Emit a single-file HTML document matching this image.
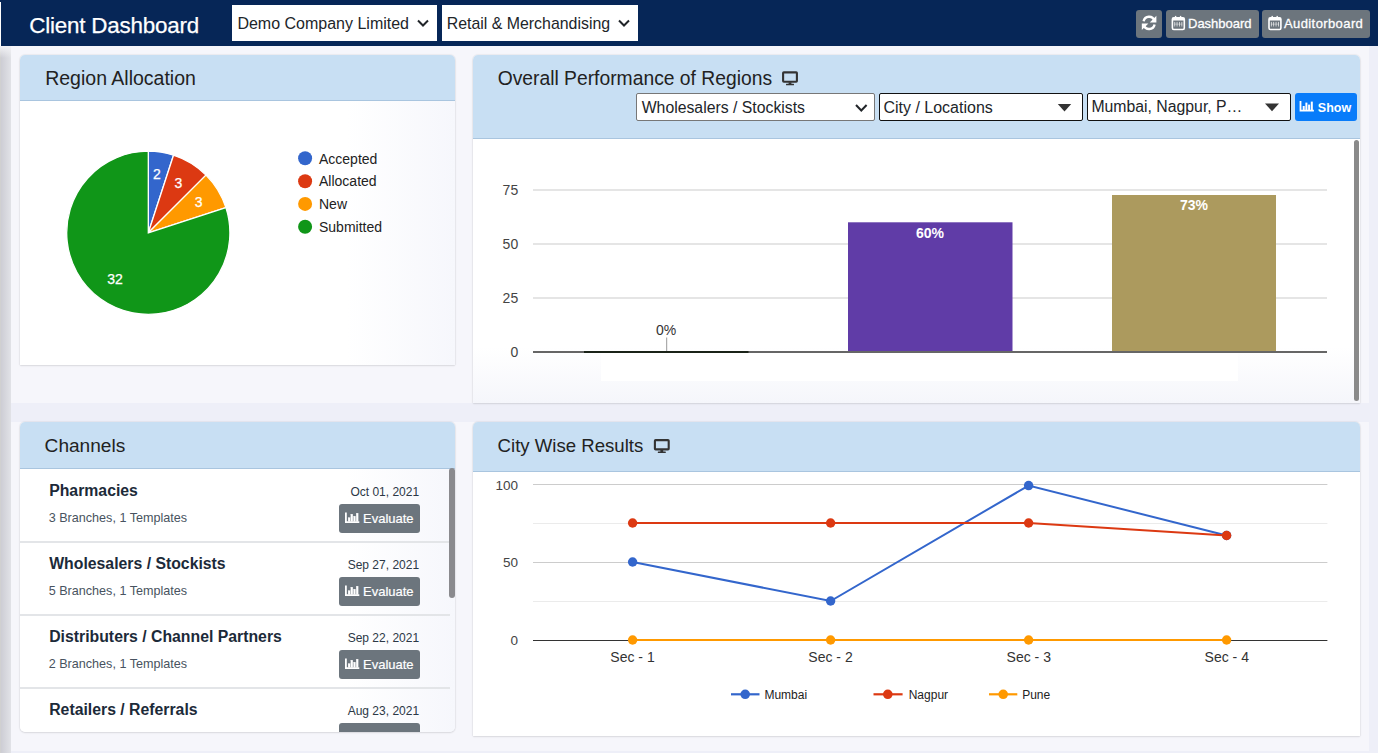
<!DOCTYPE html>
<html><head><meta charset="utf-8">
<style>
*{box-sizing:border-box;margin:0;padding:0}
html,body{width:1378px;height:753px;overflow:hidden}
body{background:#eeeff8;font-family:"Liberation Sans",sans-serif;position:relative;color:#212529}
.abs{position:absolute}
#lstrip{left:0;top:46px;width:11px;height:707px;background:linear-gradient(90deg,#d0d0d0 0,#d0d0d0 1px,#cdcdd4 1px,#e1e2e7 11px)}
#hdr{left:1px;top:0;width:1377px;height:46px;background:#062657}
.row{left:11px;width:1358px;background:#f6f6fb}
.sel{background:#fff;height:36px;top:5px}
.btn{background:#6c757d;border-radius:3px;height:28px;top:10px}
.card{background:linear-gradient(90deg,#fff 75%,#f6f7fc);border-radius:5px 5px 0 0;box-shadow:0 0 1.5px rgba(0,0,0,.22),0 1px 2px rgba(0,0,0,.08);overflow:hidden}
.ch{background:#c8dff3;border-bottom:1px solid #a9c5df;position:absolute;left:0;top:0;width:100%}
.hs{background:#fff;height:28px;top:38px;border:1px solid #777;border-radius:2px}
svg{position:absolute;left:0;top:0}
svg text{font-family:"Liberation Sans",sans-serif}
</style></head><body>
<div class="abs" id="hdr"></div>
<div class="abs" id="lstrip"></div>
<div class="abs" style="left:0;top:46px;width:20px;height:12px;background:linear-gradient(180deg,#f2f2f5,rgba(242,242,245,0))"></div>
<div class="abs row" style="top:46px;height:357px"></div>
<div class="abs row" style="top:422px;height:329px"></div>
<div class="abs" style="left:0;top:0;width:1px;height:2px;background:#062657"></div><div class="abs" style="left:0;top:2px;width:1px;height:44px;background:#fff"></div>

<div class="abs sel" style="left:231.7px;width:205.5px"></div>
<div class="abs sel" style="left:441.7px;width:196.7px"></div>
<div class="abs btn" style="left:1136px;width:26px"></div>
<div class="abs btn" style="left:1166px;width:93px"></div>
<div class="abs btn" style="left:1262px;width:108px"></div>

<!-- Card 1 -->
<div class="abs card" style="left:20px;top:55px;width:435px;height:310px">
  <div class="ch" style="height:46px"></div>
</div>
<!-- Card 2 -->
<div class="abs card" style="left:473px;top:55px;width:887px;height:348px;background:linear-gradient(180deg,#fff 84%,#f5f6fb)">
  <div class="abs" style="left:128px;top:298px;width:637px;height:28px;background:#fff"></div>
  <div class="ch" style="height:84px">
    <div class="abs hs" style="left:163px;width:239px"></div>
    <div class="abs hs" style="left:406px;width:204px;border-color:#111"></div>
    <div class="abs hs" style="left:614px;width:204px;border-color:#111"></div>
    <div class="abs" style="left:822px;top:38px;width:62px;height:28px;background:#087cfa;border-radius:3px"></div>
  </div>
  <div class="abs" style="left:881px;top:85px;width:5px;height:261px;background:#8a8a8a;border-radius:3px"></div>
</div>
<!-- Card 3 -->
<div class="abs card" style="left:20px;top:422px;width:435px;height:310px;border-radius:5px">
  <div class="ch" style="height:47px"></div>
  <div class="abs" style="left:0;top:119px;width:430px;height:2px;background:#e3e5e8"></div>
  <div class="abs" style="left:0;top:192px;width:430px;height:2px;background:#e3e5e8"></div>
  <div class="abs" style="left:0;top:265px;width:430px;height:2px;background:#e3e5e8"></div>
  <div class="abs btn" style="left:319px;top:82px;width:81px;height:29px"></div>
  <div class="abs btn" style="left:319px;top:155px;width:81px;height:29px"></div>
  <div class="abs btn" style="left:319px;top:228px;width:81px;height:29px"></div>
  <div class="abs btn" style="left:319px;top:301px;width:81px;height:29px"></div>
  <div class="abs" style="left:429px;top:46px;width:6px;height:130px;background:#8a8a8e;border-radius:3px"></div>
</div>
<!-- Card 4 -->
<div class="abs card" style="left:473px;top:422px;width:887px;height:314px;background:#fff">
  <div class="ch" style="height:50px"></div>
</div>

<svg width="1378" height="753" viewBox="0 0 1378 753">
<defs>
  <g id="cal">
    <rect x="0.8" y="2.4" width="11.9" height="11.6" rx="1.4" fill="none" stroke="#fff" stroke-width="1.6"/>
    <rect x="0.8" y="2.4" width="11.9" height="2.6" fill="#fff"/>
    <rect x="3.3" y="0.4" width="1.4" height="2.6" fill="#fff"/>
    <rect x="8.3" y="0.4" width="1.4" height="2.6" fill="#fff"/>
    <g fill="#fff" opacity=".75">
      <rect x="2.7" y="6.4" width="0.9" height="4.6"/><rect x="5" y="6.4" width="0.9" height="4.6"/><rect x="7.4" y="6.4" width="0.9" height="4.6"/><rect x="9.8" y="6.4" width="0.9" height="4.6"/>
    </g>
    <g fill="#fff" opacity=".5"><rect x="2.7" y="8.2" width="8" height="0.8"/></g>
  </g>
  <g id="bars">
    <path d="M0.9 0 V9.7 H14.3" fill="none" stroke="#fff" stroke-width="1.8"/>
    <rect x="3.1" y="5" width="2" height="4" fill="#fff"/>
    <rect x="5.8" y="1.6" width="2" height="7.4" fill="#fff"/>
    <rect x="8.5" y="3.6" width="2" height="5.4" fill="#fff"/>
    <rect x="11.2" y="0.6" width="2" height="8.4" fill="#fff"/>
  </g>
  <g id="desk">
    <rect x="1.1" y="1.1" width="13.8" height="9.3" rx="0.7" fill="none" stroke="#333" stroke-width="2.1"/>
    <rect x="6.6" y="11" width="2.8" height="2" fill="#333"/>
    <rect x="4" y="12.4" width="8" height="1.6" rx=".5" fill="#333"/>
  </g>
</defs>

<!-- header text -->
<text x="29.3" y="32.8" font-size="22.4" letter-spacing="-0.2" fill="#fff" stroke="#fff" stroke-width="0.25">Client Dashboard</text>
<text x="237.4" y="28.9" font-size="16" fill="#212529">Demo Company Limited</text>
<path d="M418 20.5 L423 25.5 L428 20.5" fill="none" stroke="#212529" stroke-width="2"/>
<text x="446.7" y="28.9" font-size="15.9" fill="#212529">Retail &amp; Merchandising</text>
<path d="M619 20.5 L624 25.5 L629 20.5" fill="none" stroke="#212529" stroke-width="2"/>

<!-- refresh icon -->
<g fill="none" stroke="#fff" stroke-width="2.4">
  <path d="M1143.6 21.2 A5.6 5.6 0 0 1 1154.4 20.6"/>
  <path d="M1154.6 24.6 A5.6 5.6 0 0 1 1143.8 25.2"/>
</g>
<path d="M1156.4 15.8 V22.4 H1149.8 Z" fill="#fff"/>
<path d="M1141.8 30 V23.4 H1148.4 Z" fill="#fff"/>

<use href="#cal" x="1171.6" y="15.5"/>
<text x="1188" y="27.9" font-size="13" fill="#fff" stroke="#fff" stroke-width="0.3">Dashboard</text>
<use href="#cal" x="1268.2" y="15.5"/>
<text x="1284" y="27.8" font-size="13" letter-spacing="0.4" fill="#fff" stroke="#fff" stroke-width="0.3">Auditorboard</text>

<!-- card titles -->
<text x="45.2" y="84.7" font-size="19.5" fill="#222">Region Allocation</text>
<text x="497.7" y="84.5" font-size="19.3" fill="#222">Overall Performance of Regions</text>
<use href="#desk" x="782" y="71.3"/>
<text x="44.6" y="451.8" font-size="19.1" fill="#222">Channels</text>
<text x="497.6" y="451.8" font-size="18.6" fill="#222">City Wise Results</text>
<use href="#desk" x="653.8" y="439"/>

<!-- card2 selects text -->
<text x="641.7" y="112.5" font-size="15.8" fill="#212529">Wholesalers / Stockists</text>
<path d="M856 105 L861.3 110.5 L866.6 105" fill="none" stroke="#212529" stroke-width="2"/>
<text x="883.4" y="112.7" font-size="16" fill="#212529">City / Locations</text>
<path d="M1057.8 104 H1071.2 L1064.5 111.4 Z" fill="#333"/>
<text x="1091.4" y="112.4" font-size="15.8" fill="#212529">Mumbai, Nagpur, P&#8230;</text>
<path d="M1265 103.5 H1279 L1272 111.2 Z" fill="#333"/>
<use href="#bars" x="1299.6" y="101" transform="translate(0,0)"/>
<text x="1317.8" y="111.8" font-size="12.5" font-weight="bold" fill="#fff">Show</text>

<!-- PIE -->
<g stroke="#fff" stroke-width="1.3">
  <path d="M148.3 232.8 L148.3 151.2 A81.6 81.6 0 0 1 173.52 155.19 Z" fill="#3366cc"/>
  <path d="M148.3 232.8 L173.52 155.19 A81.6 81.6 0 0 1 206.0 175.1 Z" fill="#dc3912"/>
  <path d="M148.3 232.8 L206.0 175.1 A81.6 81.6 0 0 1 225.91 207.58 Z" fill="#ff9900"/>
  <path d="M148.3 232.8 L225.91 207.58 A81.6 81.6 0 1 1 148.3 151.2 Z" fill="#109618"/>
</g>
<g font-size="14" fill="#fff" text-anchor="middle" stroke="#fff" stroke-width="0.25">
  <text x="156.8" y="179.2">2</text>
  <text x="178.3" y="188">3</text>
  <text x="198.7" y="206.6">3</text>
  <text x="115" y="284.3">32</text>
</g>
<circle cx="305.1" cy="158.2" r="7" fill="#3366cc"/>
<circle cx="305.1" cy="181.2" r="7" fill="#dc3912"/>
<circle cx="305.1" cy="203.9" r="7" fill="#ff9900"/>
<circle cx="305.1" cy="226.7" r="7" fill="#109618"/>
<g font-size="14" fill="#222">
  <text x="319" y="163.9">Accepted</text>
  <text x="319" y="186.2">Allocated</text>
  <text x="319" y="208.6">New</text>
  <text x="319" y="232">Submitted</text>
</g>

<!-- BAR CHART -->
<g stroke="#dddddd" stroke-width="1.5">
  <line x1="533" y1="190" x2="1327" y2="190"/>
  <line x1="533" y1="244" x2="1327" y2="244"/>
  <line x1="533" y1="298" x2="1327" y2="298"/>
</g>
<rect x="848" y="222.3" width="164.5" height="129.7" fill="#603ca7"/>
<rect x="1112" y="195" width="164" height="157" fill="#ac9a5e"/>
<line x1="533" y1="352" x2="1327" y2="352" stroke="#666" stroke-width="2"/>
<rect x="584" y="351" width="164.5" height="2" fill="#1a2318"/>
<line x1="666.7" y1="337.5" x2="666.7" y2="351" stroke="#999" stroke-width="1"/>
<g font-size="14" fill="#444" text-anchor="end">
  <text x="518.2" y="195.2">75</text>
  <text x="518.2" y="249.2">50</text>
  <text x="518.2" y="303.2">25</text>
  <text x="518.2" y="357">0</text>
</g>
<text x="666" y="335.2" font-size="14" fill="#333" text-anchor="middle">0%</text>
<text x="930" y="238.2" font-size="14" font-weight="bold" fill="#fff" text-anchor="middle">60%</text>
<text x="1194" y="210.4" font-size="14" font-weight="bold" fill="#fff" text-anchor="middle">73%</text>

<!-- CHANNELS -->
<g font-size="15.8" font-weight="bold" fill="#1c2a39">
  <text x="49.2" y="495.7">Pharmacies</text>
  <text x="49.2" y="568.7">Wholesalers / Stockists</text>
  <text x="49.2" y="641.7">Distributers / Channel Partners</text>
  <text x="49.2" y="714.7">Retailers / Referrals</text>
</g>
<g font-size="12.6" fill="#485360">
  <text x="48.7" y="521.7">3 Branches, 1 Templates</text>
  <text x="48.7" y="594.7">5 Branches, 1 Templates</text>
  <text x="48.7" y="667.7">2 Branches, 1 Templates</text>
</g>
<g font-size="12" fill="#2c3846" text-anchor="end">
  <text x="419.1" y="495.8">Oct 01, 2021</text>
  <text x="419.1" y="568.8">Sep 27, 2021</text>
  <text x="419.1" y="641.8">Sep 22, 2021</text>
  <text x="419.1" y="714.8">Aug 23, 2021</text>
</g>
<g font-size="13" fill="#fff" stroke="#fff" stroke-width="0.2">
  <use href="#bars" x="345" y="512.5"/><text x="363" y="522.8">Evaluate</text>
  <use href="#bars" x="345" y="585.5"/><text x="363" y="595.8">Evaluate</text>
  <use href="#bars" x="345" y="658.5"/><text x="363" y="668.8">Evaluate</text>
</g>

<!-- LINE CHART -->
<g stroke-width="1">
  <line x1="533" y1="484.5" x2="1327.4" y2="484.5" stroke="#cccccc"/>
  <line x1="533" y1="523.5" x2="1327.4" y2="523.5" stroke="#ebebeb"/>
  <line x1="533" y1="562.5" x2="1327.4" y2="562.5" stroke="#cccccc"/>
  <line x1="533" y1="601.5" x2="1327.4" y2="601.5" stroke="#ebebeb"/>
  <line x1="533" y1="640.5" x2="1327.4" y2="640.5" stroke="#333333"/>
</g>
<g font-size="13.5" fill="#444" text-anchor="end">
  <text x="518" y="490">100</text>
  <text x="518" y="567">50</text>
  <text x="518" y="644.6">0</text>
</g>
<g font-size="14" fill="#333" text-anchor="middle">
  <text x="632.5" y="662.3">Sec - 1</text>
  <text x="830.5" y="662.3">Sec - 2</text>
  <text x="1028.8" y="662.3">Sec - 3</text>
  <text x="1226.8" y="662.3">Sec - 4</text>
</g>
<polyline points="632.6,562.0 830.6,601.0 1028.6,485.56 1226.6,535.48" fill="none" stroke="#3366cc" stroke-width="2"/>
<g fill="#3366cc"><circle cx="632.6" cy="562.0" r="4.7"/><circle cx="830.6" cy="601.0" r="4.7"/><circle cx="1028.6" cy="485.56" r="4.7"/><circle cx="1226.6" cy="535.48" r="4.7"/></g>
<polyline points="632.6,523.0 830.6,523.0 1028.6,523.0 1226.6,535.48" fill="none" stroke="#dc3912" stroke-width="2"/>
<g fill="#dc3912"><circle cx="632.6" cy="523.0" r="4.7"/><circle cx="830.6" cy="523.0" r="4.7"/><circle cx="1028.6" cy="523.0" r="4.7"/><circle cx="1226.6" cy="535.48" r="4.7"/></g>
<polyline points="632.6,640.0 1226.6,640.0" fill="none" stroke="#ff9900" stroke-width="2"/>
<g fill="#ff9900"><circle cx="632.6" cy="640.0" r="4.7"/><circle cx="830.6" cy="640.0" r="4.7"/><circle cx="1028.6" cy="640.0" r="4.7"/><circle cx="1226.6" cy="640.0" r="4.7"/></g>
<!-- legend -->
<line x1="731" y1="694.3" x2="759.5" y2="694.3" stroke="#3366cc" stroke-width="2.2"/><circle cx="745.2" cy="694.3" r="4.8" fill="#3366cc"/>
<line x1="873.5" y1="694.3" x2="902.6" y2="694.3" stroke="#dc3912" stroke-width="2.2"/><circle cx="887.8" cy="694.3" r="4.8" fill="#dc3912"/>
<line x1="989" y1="694.3" x2="1017.3" y2="694.3" stroke="#ff9900" stroke-width="2.2"/><circle cx="1003.2" cy="694.3" r="4.8" fill="#ff9900"/>
<g font-size="12" fill="#222">
  <text x="764.4" y="698.5">Mumbai</text>
  <text x="908.7" y="698.5">Nagpur</text>
  <text x="1022.2" y="698.5">Pune</text>
</g>
</svg>
</body></html>
